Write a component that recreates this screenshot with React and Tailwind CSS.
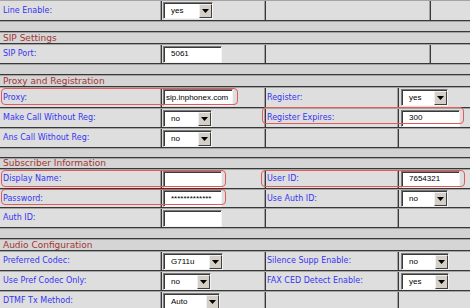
import React from "react";

function L({ children }) {
  return (
    <span className="text-[8px] leading-none text-[#3535f2] whitespace-nowrap">
      {children}
    </span>
  );
}

function TextInput({ w, value, pad = "pl-[7px]" }) {
  return (
    <div
      className={`${w} h-[17px] bg-white border border-t-[#7a7a7a] border-l-[#7a7a7a] border-b-[#f4f4f4] border-r-[#f4f4f4] shadow-[inset_1px_1px_0_#3a3a3a] flex items-center ${pad} overflow-hidden`}
    >
      <span className="font-['Liberation_Sans',sans-serif] text-[8px] leading-none text-black whitespace-nowrap">
        {value}
      </span>
    </div>
  );
}

function Select({ w, value }) {
  return (
    <div
      className={`${w} h-[17px] bg-white border border-t-[#7a7a7a] border-l-[#7a7a7a] border-b-[#f4f4f4] border-r-[#f4f4f4] shadow-[inset_1px_1px_0_#3a3a3a] flex items-stretch`}
    >
      <div className="flex-1 flex items-center pl-[7px] pt-[1px]">
        <span className="font-['Liberation_Sans',sans-serif] text-[8px] leading-none text-black whitespace-nowrap">
          {value}
        </span>
      </div>
      <div className="w-[13px] mt-[1px] bg-[#d4d0c8] border border-t-[#f0f0f0] border-l-[#f0f0f0] border-b-[#404040] border-r-[#404040] flex items-center justify-center">
        <svg width="7" height="4" viewBox="0 0 7 4">
          <path d="M0 0 L7 0 L3.5 4 Z" fill="#000" />
        </svg>
      </div>
    </div>
  );
}

function Row({ h, wide, c1, c2, c3, c4 }) {
  return (
    <div className={`flex ${h} border-t border-t-[#a4a4a4] border-b border-b-[#383838] bg-[#dedede]`}>
      <div className="w-[161px] shrink-0 flex items-center pl-[3px] border-r border-r-[#a0a0a0]">{c1}</div>
      <div className="w-[104px] shrink-0 flex items-center pl-[1px] border-l border-l-[#383838] border-r border-r-[#a0a0a0]">
        {c2}
      </div>
      <div
        className={`${wide ? "w-[165px]" : "w-[133px]"} shrink-0 flex items-center pl-[1px] border-l border-l-[#383838] border-r border-r-[#a0a0a0]`}
      >
        {c3}
      </div>
      <div className="flex-1 flex items-center pl-[2px] border-l border-l-[#383838]">{c4}</div>
    </div>
  );
}

function Spacer({ h }) {
  return <div className={`${h} border-t border-t-[#a4a4a4] border-b border-b-[#383838] bg-[#d3d3d3]`} />;
}

function Header({ h, children }) {
  return (
    <div className={`${h} border-t border-t-[#a4a4a4] border-b border-b-[#383838] bg-[#d5d5d5] flex items-center pl-[3px]`}>
      <span className="text-[9px] leading-none text-[#a33434] whitespace-nowrap">{children}</span>
    </div>
  );
}

function Mark({ cls }) {
  return (
    <div
      className={`absolute ${cls} border-[1.5px] border-[#e05c5c] rounded-[4px] pointer-events-none`}
    />
  );
}

export default function App() {
  return (
    <div className="relative w-[470px] h-[308px] overflow-hidden bg-[#dedede] font-['DejaVu_Sans',sans-serif]">
      <Row h="h-[21px]" wide c1={<L>Line Enable:</L>} c2={<Select w="w-[50px]" value="yes" />} />
      <Spacer h="h-[11px]" />
      <Header h="h-[12px]">SIP Settings</Header>
      <Row h="h-[20px]" wide c1={<L>SIP Port:</L>} c2={<TextInput w="w-[59px]" value="5061" />} />
      <Spacer h="h-[11px]" />
      <Header h="h-[12px]">Proxy and Registration</Header>
      <Row
        h="h-[21px]"
        c1={<L>Proxy:</L>}
        c2={<TextInput w="w-[70px]" value="sip.inphonex.com" pad="pl-[2px]" />}
        c3={<L>Register:</L>}
        c4={<Select w="w-[47px]" value="yes" />}
      />
      <Row
        h="h-[20px]"
        c1={<L>Make Call Without Reg:</L>}
        c2={<Select w="w-[49px]" value="no" />}
        c3={<L>Register Expires:</L>}
        c4={<TextInput w="w-[59px]" value="300" />}
      />
      <Row h="h-[20px]" c1={<L>Ans Call Without Reg:</L>} c2={<Select w="w-[49px]" value="no" />} />
      <Spacer h="h-[10px]" />
      <Header h="h-[11px]">Subscriber Information</Header>
      <Row
        h="h-[20px]"
        c1={<L>Display Name:</L>}
        c2={<TextInput w="w-[59px]" value="" />}
        c3={<L>User ID:</L>}
        c4={<TextInput w="w-[59px]" value="7654321" />}
      />
      <Row
        h="h-[19px]"
        c1={<L>Password:</L>}
        c2={<TextInput w="w-[59px]" value="*************" />}
        c3={<L>Use Auth ID:</L>}
        c4={<Select w="w-[47px]" value="no" />}
      />
      <Row h="h-[20px]" c1={<L>Auth ID:</L>} c2={<TextInput w="w-[59px]" value="" />} />
      <Spacer h="h-[11px]" />
      <Header h="h-[12px]">Audio Configuration</Header>
      <Row
        h="h-[20px]"
        c1={<L>Preferred Codec:</L>}
        c2={<Select w="w-[60px]" value="G711u" />}
        c3={<L>Silence Supp Enable:</L>}
        c4={<Select w="w-[48px]" value="no" />}
      />
      <Row
        h="h-[20px]"
        c1={<L>Use Pref Codec Only:</L>}
        c2={<Select w="w-[48px]" value="no" />}
        c3={<L>FAX CED Detect Enable:</L>}
        c4={<Select w="w-[48px]" value="yes" />}
      />
      <Row h="h-[20px]" c1={<L>DTMF Tx Method:</L>} c2={<Select w="w-[57px]" value="Auto" />} />

      <Mark cls="left-[1px] top-[88px] w-[237px] h-[17px]" />
      <Mark cls="left-[262px] top-[107px] w-[202px] h-[17px]" />
      <Mark cls="left-[1px] top-[170px] w-[225px] h-[17px]" />
      <Mark cls="left-[1px] top-[189px] w-[225px] h-[16px]" />
      <Mark cls="left-[261px] top-[170px] w-[204px] h-[17px]" />
    </div>
  );
}
